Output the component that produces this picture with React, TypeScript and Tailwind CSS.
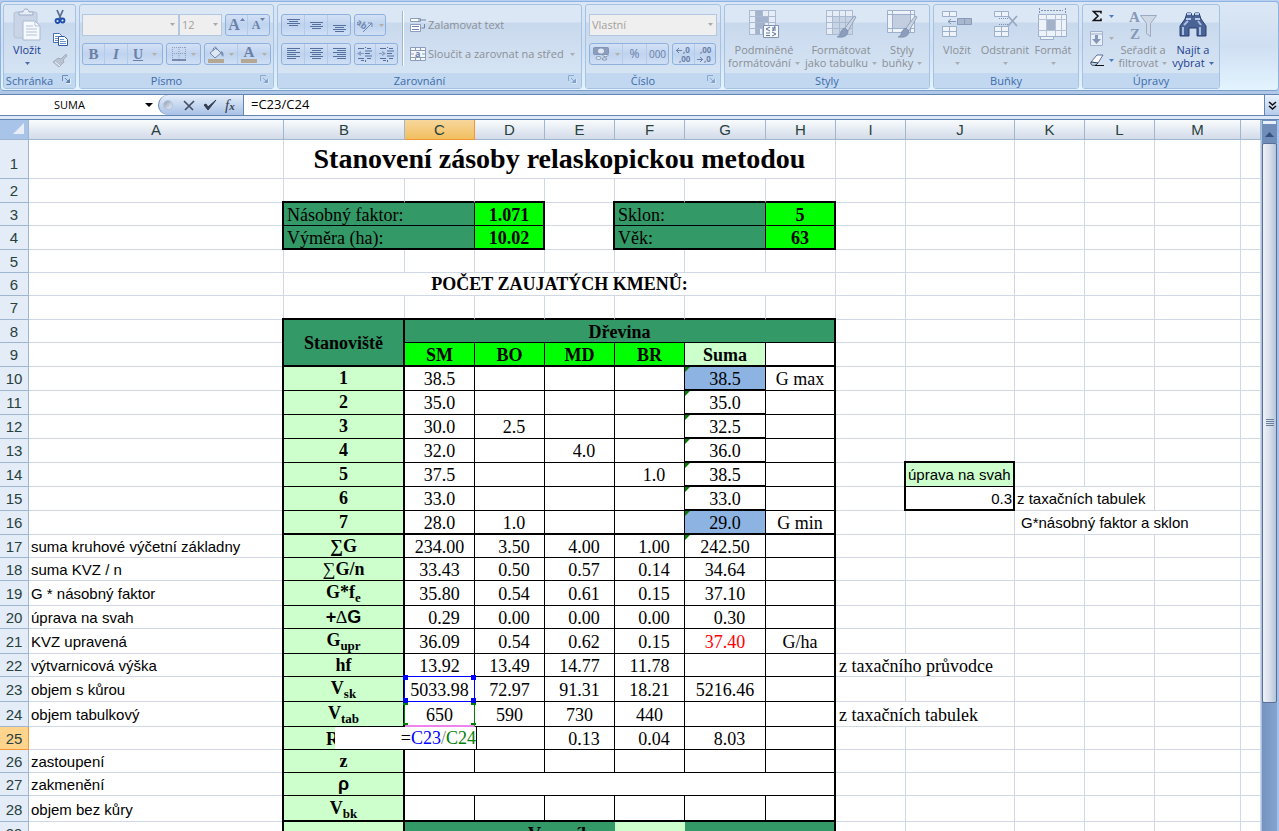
import { ReactNode } from "react";
import clsx from "clsx";

type Cell = {
  text?: ReactNode;
  span?: number;
  rows?: number;
  className?: string;
};

type Row = {
  n: number;
  height: string;
  cells: Record<string, Cell>;
};

const COLUMNS = ["A", "B", "C", "D", "E", "F", "G", "H", "I", "J", "K", "L", "M", ""];

const COLUMN_WIDTHS = [
  "w-[29px]",
  "w-[255px]",
  "w-[121px]",
  "w-[70px]",
  "w-[70px]",
  "w-[70px]",
  "w-[70px]",
  "w-[81px]",
  "w-[70px]",
  "w-[70px]",
  "w-[109px]",
  "w-[70px]",
  "w-[70px]",
  "w-[86px]",
  ""
];

const DARK = "bg-[#339966]";
const LIME = "bg-[#00ff00]";
const PALE = "bg-[#ccffcc]";
const BLUE = "bg-[#8db3e2]";
const SANS = "font-['Liberation_Sans',sans-serif] text-[15px]";

function numbers(values: string[]): Record<string, Cell> {
  const cells: Record<string, Cell> = {};
  values.forEach((value, i) => {
    // single digit values keep room for the missing tens
    cells["CDEFG"[i]] = { text: value, className: clsx("text-center", /^\d\./.test(value) && "pl-[9px]") };
  });
  return cells;
}

function label(text: ReactNode): Cell {
  return { text, className: clsx("text-center align-middle font-bold", PALE) };
}

function subLabel(base: string, sub: string): Cell {
  return {
    text: <>{base}<span className="relative top-1 text-[13px]">{sub}</span></>,
    className: clsx("text-center font-bold", PALE)
  };
}

function note(text: string): Cell {
  return { text, className: clsx("pl-[2px] text-left", SANS) };
}

function ErrorMark() {
  return <span className="absolute top-0 left-0 size-[5px] bg-[#008000] [clip-path:polygon(0_0,100%_0,0_100%)]" />;
}

function plot(n: number, values: string[], extra: Record<string, Cell> = {}): Row {
  const cells = numbers(values);
  const sum = cells.G;
  cells.G = {
    text: <><ErrorMark />{sum.text}</>,
    className: clsx("relative", sum.className, (n === 10 || n === 16) && BLUE)
  };
  cells.B = label(n - 9);
  return { n, height: "h-[24px]", cells: { ...cells, ...extra } };
}

const ROWS: Row[] = [
  { n: 1, height: "h-[39px]", cells: { B: { text: "Stanovení zásoby relaskopickou metodou", span: 7, className: "text-center align-middle font-bold text-[28px] leading-8" } } },
  { n: 2, height: "h-[24px]", cells: {} },
  {
    n: 3,
    height: "h-[23px]",
    cells: {
      B: { text: "Násobný faktor:", span: 2, className: clsx("pl-[3px]", DARK) },
      D: { text: "1.071", className: clsx("text-center font-bold", LIME) },
      F: { text: "Sklon:", span: 2, className: clsx("pl-[3px]", DARK) },
      H: { text: "5", className: clsx("text-center font-bold", LIME) }
    }
  },
  {
    n: 4,
    height: "h-[24px]",
    cells: {
      B: { text: "Výměra (ha):", span: 2, className: clsx("pl-[3px]", DARK) },
      D: { text: "10.02", className: clsx("text-center font-bold", LIME) },
      F: { text: "Věk:", span: 2, className: clsx("pl-[3px]", DARK) },
      H: { text: "63", className: clsx("text-center font-bold", LIME) }
    }
  },
  { n: 5, height: "h-[23px]", cells: {} },
  { n: 6, height: "h-[23px]", cells: { B: { text: "POČET ZAUJATÝCH KMENŮ:", span: 7, className: "text-center align-middle font-bold" } } },
  { n: 7, height: "h-[24px]", cells: {} },
  {
    n: 8,
    height: "h-[23px]",
    cells: {
      B: { text: "Stanoviště", rows: 2, className: clsx("text-center align-middle font-bold", DARK) },
      C: { text: "Dřevina", span: 6, className: clsx("text-center font-bold", DARK) }
    }
  },
  {
    n: 9,
    height: "h-[24px]",
    cells: {
      C: { text: "SM", className: clsx("text-center font-bold", LIME) },
      D: { text: "BO", className: clsx("text-center font-bold", LIME) },
      E: { text: "MD", className: clsx("text-center font-bold", LIME) },
      F: { text: "BR", className: clsx("text-center font-bold", LIME) },
      G: { text: "Suma", className: clsx("text-center font-bold", PALE) }
    }
  },
  plot(10, ["38.5", "", "", "", "38.5"], { H: { text: "G max", className: "text-center" } }),
  plot(11, ["35.0", "", "", "", "35.0"]),
  plot(12, ["30.0", "2.5", "", "", "32.5"]),
  plot(13, ["32.0", "", "4.0", "", "36.0"]),
  plot(14, ["37.5", "", "", "1.0", "38.5"], {
    J: { text: "úprava na svah", className: clsx("pl-[2px]", SANS, PALE) }
  }),
  plot(15, ["33.0", "", "", "", "33.0"], {
    J: { text: "0.3", className: clsx("pr-px text-right", SANS) },
    K: note("z taxačních tabulek")
  }),
  plot(16, ["28.0", "1.0", "", "", "29.0"], {
    H: { text: "G min", className: "text-center" },
    K: { text: "G*násobný faktor a sklon", className: clsx("pl-[6px]", SANS) }
  }),
  {
    n: 17,
    height: "h-[23px]",
    cells: {
      ...numbers(["234.00", "3.50", "4.00", "1.00", ""]),
      A: note("suma kruhové výčetní základny"),
      B: label("∑G"),
      G: { text: <><ErrorMark />242.50</>, className: "relative text-center" }
    }
  },
  { n: 18, height: "h-[23px]", cells: { ...numbers(["33.43", "0.50", "0.57", "0.14", "34.64"]), A: note("suma KVZ / n"), B: label(<><span className="font-normal">∑</span>G/n</>) } },
  { n: 19, height: "h-[25px]", cells: { ...numbers(["35.80", "0.54", "0.61", "0.15", "37.10"]), A: note("G * násobný faktor"), B: subLabel("G*f", "e") } },
  {
    n: 20,
    height: "h-[23px]",
    cells: {
      ...numbers(["0.29", "0.00", "0.00", "0.00", "0.30"]),
      A: note("úprava na svah"),
      B: label(<span className="font-['Liberation_Sans',sans-serif]">+<span className="font-['Liberation_Serif',serif] font-normal">∆</span>G</span>)
    }
  },
  {
    n: 21,
    height: "h-[25px]",
    cells: {
      ...numbers(["36.09", "0.54", "0.62", "0.15", ""]),
      A: note("KVZ upravená"),
      B: subLabel("G", "upr"),
      G: { text: "37.40", className: "text-center text-[#ff0000]" },
      H: { text: "G/ha", className: "text-center" }
    }
  },
  {
    n: 22,
    height: "h-[23px]",
    cells: {
      ...numbers(["13.92", "13.49", "14.77", "11.78", ""]),
      A: note("výtvarnicová výška"),
      B: label("hf"),
      I: { text: "z taxačního průvodce", className: "pl-[3px]" }
    }
  },
  {
    n: 23,
    height: "h-[25px]",
    cells: {
      ...numbers(["", "72.97", "91.31", "18.21", "5216.46"]),
      A: note("objem s kůrou"),
      B: subLabel("V", "sk"),
      C: { text: <>5033.98<RangeFrame /></>, className: "relative text-center" }
    }
  },
  {
    n: 24,
    height: "h-[25px]",
    cells: {
      ...numbers(["", "590", "730", "440", ""]),
      A: note("objem tabulkový"),
      B: subLabel("V", "tab"),
      C: { text: <>650<DivisorFrame /></>, className: "relative text-center" },
      I: { text: "z taxačních tabulek", className: "pl-[3px]" }
    }
  },
  {
    n: 25,
    height: "h-[23px]",
    cells: {
      ...numbers(["", "", "0.13", "0.04", "8.03"]),
      B: { text: "R", className: clsx("pl-[42px] text-left font-bold", PALE) },
      C: { text: <CellEditor />, className: "relative" }
    }
  },
  { n: 26, height: "h-[23px]", cells: { A: note("zastoupení"), B: label("z") } },
  { n: 27, height: "h-[23px]", cells: { A: note("zakmenění"), B: label(<span className="font-['Liberation_Sans',sans-serif]">ρ</span>), C: { span: 6 } } },
  { n: 28, height: "h-[26px]", cells: { A: note("objem bez kůry"), B: subLabel("V", "bk") } },
  {
    n: 29,
    height: "h-[24px]",
    cells: {
      B: { className: PALE },
      C: { text: "Vzorník", span: 3, className: clsx("pr-6 text-right font-bold", DARK) },
      F: { className: PALE },
      G: { span: 2, className: DARK }
    }
  },
  { n: 30, height: "h-[24px]", cells: {} },
  { n: 31, height: "h-[24px]", cells: {} }
];

const has = (list: string, col: string) => col !== "" && list.includes(col);

function rightBorder(col: string, n: number) {
  const inTable = n >= 8 && n <= 29;
  const inInputs = n === 3 || n === 4;
  const thick =
    (inTable && has("ABH", col)) || (inInputs && has("ADEH", col)) || ((n === 14 || n === 15) && has("IJ", col));
  // the strip runs over the corners, where the row lines would cut the border
  if (thick) return "relative border-r-2 border-r-black after:absolute after:-top-0.5 after:-right-0.5 after:-bottom-px after:w-0.5 after:bg-black";
  if (n === 29 && has("CDEFG", col)) return "border-r-0";
  if ((n >= 9 && n <= 28 && has("CDEFG", col)) || (inInputs && has("CG", col))) return "border-r border-r-black";
  if ((n === 22 || n === 24) && col === "I") return "border-r-0";
  if ((n === 15 && col === "K") || (n === 16 && has("KL", col))) return "border-r-0";
  return "border-r border-r-[#d0d7e5]";
}

function bottomBorder(col: string, n: number) {
  const table = has("BCDEFGH", col);
  const inputs = has("BCDFGH", col);
  const thick =
    ((n === 2 || n === 4) && inputs) ||
    ([7, 9, 16, 28].includes(n) && table) ||
    (n >= 10 && n <= 15 && col === "G") ||
    ((n === 13 || n === 15) && col === "J");
  if (thick) return "border-b-2 border-b-black";
  if ((n === 3 && inputs) || (n >= 8 && n <= 27 && table) || (n === 14 && col === "J")) return "border-b border-b-black";
  return "border-b border-b-[#d0d7e5]";
}

function RangeFrame() {
  return (
    <span className="pointer-events-none absolute -inset-px z-10 border border-[#0000ff]">
      <i className="absolute -top-0.5 -left-0.5 size-[5px] bg-[#0000ff]" />
      <i className="absolute -top-0.5 -right-0.5 size-[5px] bg-[#0000ff]" />
      <i className="absolute -bottom-0.5 -left-0.5 size-[5px] bg-[#0000ff]" />
      <i className="absolute -right-0.5 -bottom-0.5 size-[5px] bg-[#0000ff]" />
    </span>
  );
}

function DivisorFrame() {
  return (
    <span className="pointer-events-none absolute -inset-px border-x border-b-2 border-x-[#008000] border-b-[#ee82ee]">
      <i className="absolute top-0 -left-0.5 h-1 w-[5px] bg-[#008000]" />
      <i className="absolute top-0 -right-0.5 h-1 w-[5px] bg-[#008000]" />
      <i className="absolute bottom-0 -left-0.5 h-0.5 w-[5px] bg-[#008000]" />
      <i className="absolute -right-0.5 bottom-0 h-0.5 w-[5px] bg-[#008000]" />
    </span>
  );
}

function CellEditor() {
  return (
    <div
      aria-label="C25"
      className="absolute top-0 -right-[3px] z-10 h-[23px] w-[142px] border-r border-b border-black bg-white text-right leading-[22px] whitespace-nowrap"
      contentEditable
      role="textbox"
      suppressContentEditableWarning
    >
      =<span className="text-[#0000ff]">C23</span>
      <span className="text-[#808080]">/</span>
      <span className="text-[#008000]">C24</span>
    </div>
  );
}

function Sheet() {
  return (
    <div className="min-w-0 flex-1 overflow-hidden bg-white">
      <table className="w-full table-fixed border-separate border-spacing-0 font-['Liberation_Serif',serif] text-[18px] leading-5 text-black">
        <colgroup>
          {COLUMN_WIDTHS.map((width, i) => <col key={i} className={width} />)}
        </colgroup>
        <thead>
          <tr className="h-5 font-['Liberation_Sans',sans-serif] text-[15px] leading-[18px] text-[#27413e]">
            <th aria-label="Vybrat vše" className="border-r border-b border-[#9eb6ce] bg-[#a9c4e9] p-0">
              <svg className="ml-auto block" width="17" height="17" viewBox="0 0 17 17"><path d="M13 2v11H2z" fill="#e8eef7" /></svg>
            </th>
            {COLUMNS.map((col, i) => (
              <th
                key={i}
                className={clsx(
                  "border-r border-b p-0 font-normal",
                  col === "C"
                    ? "border-[#f29536] bg-linear-to-b from-[#f8d79b] to-[#f1bf5e]"
                    : "border-[#9eb6ce] bg-linear-to-b from-[#f9fcfd] to-[#d3dbe9]"
                )}
                scope="col"
              >
                {col}
              </th>
            ))}
          </tr>
        </thead>
        <tbody>
          {ROWS.map((row) => (
            <SheetRow key={row.n} row={row} />
          ))}
        </tbody>
      </table>
    </div>
  );
}

function SheetRow({ row }: { row: Row }) {
  const tall = row.height !== "h-[23px]";
  const cells: ReactNode[] = [];
  for (let i = 0; i < COLUMNS.length; i++) {
    const col = COLUMNS[i];
    // B9 is covered by the cell above
    if (row.n === 9 && col === "B") continue;
    const cell = row.cells[col] ?? {};
    const last = COLUMNS[i + (cell.span ?? 1) - 1];
    const bottom = bottomBorder(col, row.n + (cell.rows ?? 1) - 1);
    cells.push(
      <td
        key={i}
        className={clsx(
          "p-0 whitespace-nowrap",
          !cell.className?.includes("align-middle") && "align-bottom",
          tall && !bottom.includes("border-b-2") && "pb-px",
          rightBorder(last, row.n),
          bottom,
          cell.className
        )}
        colSpan={cell.span}
        rowSpan={cell.rows}
      >
        {cell.text}
      </td>
    );
    i += (cell.span ?? 1) - 1;
  }
  return (
    <tr className={row.height}>
      <th
        className={clsx(
          "border-r border-b p-0 align-bottom font-['Liberation_Sans',sans-serif] text-[15px] leading-5 font-normal text-[#27413e]",
          row.n === 1 ? "pb-1" : tall && "pb-px",
          row.n === 25 ? "border-[#f29536] bg-[#ffd58d]" : "border-[#9eb6ce] bg-[#e4ecf7]"
        )}
        scope="row"
      >
        {row.n}
      </th>
      {cells}
    </tr>
  );
}

function Scrollbar() {
  return (
    <div className="flex w-[18px] shrink-0 flex-col border-r-2 border-l border-[#a3c3ee] bg-linear-to-r from-[#7493c0] to-[#86a4cd]">
      <div className="h-[5px] border border-[#6f8fbd] bg-[#e9f0fa]" />
      <button aria-label="Nahoru" className="flex h-[18px] items-center justify-center bg-[#6f8db8]" type="button">
        <svg width="9" height="5" viewBox="0 0 9 5"><path d="M4.500 0 9 5H0z" fill="#33507f" /></svg>
      </button>
      <div className="flex flex-[560] items-center justify-center rounded-[2px] border border-[#5b6f96] bg-linear-to-r from-[#eef2f7] via-[#d9e0ea] to-[#b4c4da]">
        <svg width="8" height="8" viewBox="0 0 8 8"><path d="M0 .5h8M0 2.500h8M0 4.500h8M0 6.500h8" stroke="#6b7f9f" /></svg>
      </div>
      <div className="flex-[129]" />
    </div>
  );
}

/* ribbon pieces */

function Group({ title, launcher, faded, className, children }: { title: string; launcher?: boolean; faded?: boolean; className: string; children: ReactNode }) {
  return (
    <section className={clsx("flex h-[85px] shrink-0 flex-col rounded-[3px] border border-[#a5c2e2] bg-linear-to-b from-[#dbe7f5] from-20% via-[#c9d9ed] via-22% to-[#d9e7f5]", className)}>
      <div className="flex-1">{children}</div>
      <div className={clsx("relative h-[15px] rounded-b-[2px] bg-[#c1d8f0] text-center leading-[15px] text-[#3e6aaa]", launcher && "pr-5")}>
        {title}
        {launcher && (
          <button aria-label={`${title} – možnosti`} className={clsx("absolute top-[2px] right-1", faded && "opacity-60")} type="button">
            <svg className="block" width="9" height="9" viewBox="0 0 9 9"><path d="M.5 6V.5H6M3 3l3 3" fill="none" stroke="#6c8cb8" /><path d="M8 3.500V8H3.500z" fill="#5a7fb2" /><path d="M4 8.500h4.500V4" fill="none" stroke="#fff" strokeWidth=".6" /></svg>
          </button>
        )}
      </div>
    </section>
  );
}

function Arrow({ className = "text-[#a9adb1]" }: { className?: string }) {
  return <svg className={clsx("inline-block shrink-0", className)} width="5" height="3" viewBox="0 0 5 3"><path d="M0 0h5L2.500 3z" fill="currentColor" /></svg>;
}

function ButtonBar({ children }: { children: ReactNode }) {
  return <div className="flex h-[22px] divide-x divide-[#b3cbea] rounded-[3px] border border-[#8fb1de] bg-linear-to-b from-[#d3e1f5] via-[#bfd3ef] to-[#cfdff5]">{children}</div>;
}

function Tool({ title, className = "w-[23px]", children }: { title: string; className?: string; children: ReactNode }) {
  return <button aria-label={title} className={clsx("flex items-center justify-center gap-[5px] text-[#6a80a6]", className)} type="button">{children}</button>;
}

function Combo({ title, value, className }: { title: string; value: string; className: string }) {
  return (
    <div className={clsx("relative h-[22px]", className)}>
      <select aria-label={title} className="size-full appearance-none border border-[#b3c7e1] bg-[#efefef] pl-[2px] text-[#a3a09a]" defaultValue={value}>
        <option>{value}</option>
      </select>
      <Arrow className="pointer-events-none absolute top-[9px] right-1 text-[#a9a9a9]" />
    </div>
  );
}

function Lines({ d }: { d: string }) {
  return <svg width="15" height="15" viewBox="0 0 15 15"><path d={d} stroke="#55709c" strokeWidth="1" /></svg>;
}

function BigTool({ lines, arrowBelow, active, className, children }: { lines: string[]; arrowBelow?: boolean; active?: boolean; className: string; children: ReactNode }) {
  return (
    <button className={clsx("flex shrink-0 flex-col items-center whitespace-nowrap", active ? "text-[#1c3d8f]" : "text-[#8b8f96]", className)} type="button">
      <span className="flex h-[38px] items-center justify-center">{children}</span>
      <span className="leading-[14px]">{lines[0]}</span>
      {arrowBelow ? (
        <span className="flex h-3 items-center"><Arrow className={active ? "text-[#4a6ca5]" : "text-[#a9adb1]"} /></span>
      ) : (
        <span className="flex items-center gap-1 leading-3">{lines[1]}<Arrow className={active ? "text-[#4a6ca5]" : "text-[#a9adb1]"} /></span>
      )}
    </button>
  );
}

function GridIcon({ children }: { children?: ReactNode }) {
  return (
    <svg width="32" height="32" viewBox="0 0 32 32">
      <path d="M1 2h27v24H1z" fill="#e6edf7" />
      <path d="M1 2.500h27M1 8.500h27M1 14.500h27M1 20.500h27M1 26.500h27M1.500 2v24M7.500 2v24M14.500 2v24M20.500 2v24M27.500 2v24" stroke="#a9bad2" fill="none" />
      {children}
    </svg>
  );
}

function BrushMark() {
  return (
    <g>
      <path d="M31 9 29 8 20 20l3 3z" fill="#c9d3e2" stroke="#8395b3" strokeWidth=".8" />
      <path d="m19 20 4 3c0 5-4 7-11 6 3-1 3-3 4-6z" fill="#8b9dbb" stroke="#7488aa" strokeWidth=".6" />
    </g>
  );
}

function ClipboardGroup() {
  return (
    <Group title="Schránka" launcher className="w-[73px]">
      <div className="flex">
        <BigTool lines={["Vložit"]} arrowBelow active className="w-[46px]">
          <svg width="32" height="34" viewBox="0 0 32 34">
            <rect x="3" y="5" width="23" height="26" rx="2" fill="#c9d5e6" stroke="#b3c2d8" />
            <path d="M8 8V5h4c0-4 6-4 6 0h4v3z" fill="#e9eef5" stroke="#9cadc8" />
            <path d="M12 14h12l5 5v14H12z" fill="#f5f8fc" stroke="#a9b9d0" />
            <path d="M24 14v5h5M15 19h7M15 22h11M15 25h11M15 28h11" fill="none" stroke="#b4c3d9" />
          </svg>
        </BigTool>
        <div className="flex flex-col items-center gap-[6px] pt-[4px] pl-[2px]">
          <button aria-label="Vyjmout" type="button">
            <svg className="block" width="16" height="16" viewBox="0 0 16 16">
              <path d="m5 1 4 9M11 1 7 10" stroke="#5d6f8f" strokeWidth="1.800" />
              <circle cx="5.500" cy="12" r="2" fill="none" stroke="#1f4dae" strokeWidth="1.800" />
              <circle cx="10.500" cy="11.500" r="2" fill="none" stroke="#1f4dae" strokeWidth="1.800" />
            </svg>
          </button>
          <button aria-label="Kopírovat" type="button">
            <svg className="block" width="16" height="16" viewBox="0 0 16 16">
              <path d="M1.500 2.500h6l2 2v7h-8z" fill="#fff" stroke="#4470b8" />
              <path d="M3 5.500h4M3 7.500h4M3 9.500h4" stroke="#6d92cf" />
              <path d="M6.500 5.500h6l3 3v6h-9z" fill="#fff" stroke="#2f5cab" />
              <path d="M8 8.500h4M8 10.500h6M8 12.500h6" stroke="#6d92cf" />
            </svg>
          </button>
          <button aria-label="Kopírovat formát" type="button">
            <svg className="block" width="16" height="16" viewBox="0 0 16 16">
              <path d="m14 1-5 5-3-1-5 4 6 5 5-5-1-2 4-4z" fill="#b9c3d1" stroke="#98a4b8" strokeWidth=".8" />
              <path d="m3 9 5 4" stroke="#edf1f6" />
            </svg>
          </button>
        </div>
      </div>
    </Group>
  );
}

function FontGroup() {
  return (
    <Group title="Písmo" launcher faded className="w-[195px]">
      <div className="flex flex-col gap-[7px] pt-[9px] pl-[2px]">
        <div className="flex">
          <Combo title="Písmo" value="" className="w-[97px]" />
          <Combo title="Velikost písma" value="12" className="w-[43px]" />
          <div className="ml-[3px]">
            <ButtonBar>
              <Tool title="Zvětšit písmo" className="w-[22px] font-['Liberation_Serif',serif] text-[16px] leading-4 font-bold"><span className="flex">A<svg width="5" height="9" viewBox="0 0 5 9"><path d="M0 4 2.500 1 5 4z" fill="currentColor" /></svg></span></Tool>
              <Tool title="Zmenšit písmo" className="w-[21px] font-['Liberation_Serif',serif] text-[12px] leading-4 font-bold"><span className="flex">A<svg width="5" height="9" viewBox="0 0 5 9"><path d="M0 1h5L2.500 4z" fill="currentColor" /></svg></span></Tool>
            </ButtonBar>
          </div>
        </div>
        <div className="flex gap-[3px]">
          <ButtonBar>
            <Tool title="Tučné" className="w-[22px] font-['Liberation_Serif',serif] text-[15px] font-bold">B</Tool>
            <Tool title="Kurzíva" className="w-[23px] font-['Liberation_Serif',serif] text-[15px] font-bold italic">I</Tool>
            <Tool title="Podtržené" className="w-[34px] font-['Liberation_Serif',serif] text-[14px] font-bold"><u>U</u><Arrow className="ml-1 text-[#b5b0a5]" /></Tool>
          </ButtonBar>
          <ButtonBar>
            <Tool title="Ohraničení" className="w-[33px]">
              <svg width="14" height="14" viewBox="0 0 14 14"><path d="M.5 0v13M7 0v13M13.500 0v13M0 .5h14M0 6.500h14" stroke="#8da0bf" strokeDasharray="1 1" /><path d="M0 13h14" stroke="#5b7199" strokeWidth="1.500" /></svg>
              <Arrow className="text-[#b5b0a5]" />
            </Tool>
          </ButtonBar>
          <ButtonBar>
            <Tool title="Barva výplně" className="w-[33px]">
              <svg width="16" height="17" viewBox="0 0 16 17"><path d="m8 2 5 5-6 5-5-5z" fill="#dfe7f2" stroke="#6f86ac" /><path d="M5 5c0-5 4-5 4-1" fill="none" stroke="#6f86ac" /><path d="M13 5c3 1 3 4 2 6-2-2-3-4-2-6z" fill="#7e93b6" /><path d="M0 13h16v4H0z" fill="#b3a892" /></svg>
              <Arrow className="text-[#b5b0a5]" />
            </Tool>
            <Tool title="Barva písma" className="w-[32px] font-['Liberation_Serif',serif] text-[15px] font-bold">
              <span className="flex w-4 flex-col items-center border-b-[4px] border-[#b3a892] leading-[13px]">A</span>
              <Arrow className="text-[#b5b0a5]" />
            </Tool>
          </ButtonBar>
        </div>
      </div>
    </Group>
  );
}

const INDENT = "M8.500 0v1M8.500 13v2M1 1.500h6M10 1.500h4M8 4h7M8 6.500h5M8 9h7M1 11.500h6M10 11.500h4M4 13.500h3";

function AlignmentGroup() {
  return (
    <Group title="Zarovnání" launcher faded className="w-[305px]">
      <div className="flex pt-[9px] pl-[3px]">
        <div className="flex flex-col gap-[7px]">
          <div className="flex gap-[3px]">
            <ButtonBar>
              <Tool title="Nahoru"><Lines d="M1 1.500h13M3 3.500h9M1 5.500h13M3 7.500h9" /></Tool>
              <Tool title="Na střed"><Lines d="M1 4.500h13M3 6.500h9M1 8.500h13M3 10.500h9" /></Tool>
              <Tool title="Dolů" className="w-[22px]"><Lines d="M1 7.500h13M3 9.500h9M1 11.500h13M3 13.500h9" /></Tool>
            </ButtonBar>
            <ButtonBar>
              <Tool title="Orientace" className="w-[30px] gap-0.5">
                <svg width="17" height="16" viewBox="0 0 17 16"><text x="1" y="8" fontSize="9" fontWeight="bold" fill="#7288ae" transform="rotate(35 2 3)">ab</text><path d="m6 15 9-9M11 6h4v4" stroke="#7288ae" fill="none" /></svg>
                <Arrow className="text-[#b5b0a5]" />
              </Tool>
            </ButtonBar>
          </div>
          <div className="flex gap-[3px]">
            <ButtonBar>
              <Tool title="Vlevo"><Lines d="M1 1.500h13M1 3.500h9M1 5.500h13M1 7.500h9M1 9.500h13M1 11.500h9" /></Tool>
              <Tool title="Střed"><Lines d="M1 1.500h13M3 3.500h9M1 5.500h13M3 7.500h9M1 9.500h13M3 11.500h9" /></Tool>
              <Tool title="Vpravo" className="w-[22px]"><Lines d="M1 1.500h13M5 3.500h9M1 5.500h13M5 7.500h9M1 9.500h13M5 11.500h9" /></Tool>
            </ButtonBar>
            <ButtonBar>
              <Tool title="Zmenšit odsazení" className="w-[21px]"><svg width="16" height="15" viewBox="0 0 16 15"><path d={INDENT} stroke="#55709c" /><path d="M4 4v5L0 6.500zM4 6h3v1H4z" fill="#8a9dbf" /></svg></Tool>
              <Tool title="Zvětšit odsazení" className="w-[21px]"><svg width="16" height="15" viewBox="0 0 16 15"><path d={INDENT} stroke="#55709c" /><path d="M3 4v5l4-2.500zM0 6h4v1H0z" fill="#8a9dbf" /></svg></Tool>
            </ButtonBar>
          </div>
        </div>
        <div className="-mt-[3px] ml-1 h-[55px] w-0.5 border-r border-l border-r-white border-l-[#9db6d5]" />
        <div className="ml-[6px] flex flex-col gap-[7px] text-[#8b8f96]">
          <button className="flex h-[22px] items-center gap-[2px] whitespace-nowrap" type="button">
            <svg width="16" height="16" viewBox="0 0 16 16"><path d="M.5 1.500h10v3H.5z" fill="#fff" stroke="#8b9dbb" /><path d="M8 3h8" stroke="#6d83a8" /><path d="M.5 7.500h10v7H.5z" fill="#fff" stroke="#8b9dbb" /><path d="M2 9.500h7M2 12.500h7M14.500 7v4h-3" stroke="#6d83a8" fill="none" /></svg>
            Zalamovat text
          </button>
          <button className="flex h-[22px] items-center gap-[2px] whitespace-nowrap" type="button">
            <svg width="16" height="16" viewBox="0 0 16 16"><path d="M.5 1.500h15v13H.5z" fill="#f4f7fb" stroke="#8b9dbb" /><path d="M0 4.500h16M0 11.500h16M5.500 1v3M10.500 1v3M5.500 12v3M10.500 12v3M1 8h3M12 8h3" stroke="#8b9dbb" /><text x="5" y="11" fontSize="9" fontWeight="bold" fill="#6d83a8">a</text></svg>
            Sloučit a zarovnat na střed
            <Arrow className="ml-1 text-[#a9adb1]" />
          </button>
        </div>
      </div>
    </Group>
  );
}

function NumberGroup() {
  return (
    <Group title="Číslo" launcher faded className="w-[136px]">
      <div className="flex flex-col gap-[7px] pt-[9px] pl-[3px]">
        <Combo title="Formát čísla" value="Vlastní" className="w-[128px]" />
        <div className="flex gap-[3px]">
          <ButtonBar>
            <Tool title="Měna" className="w-[33px]">
              <svg width="17" height="16" viewBox="0 0 17 16"><rect x=".5" y="1.500" width="15" height="7" rx="1" fill="#8b9dbb" stroke="#8094b3" /><ellipse cx="8" cy="5" rx="3" ry="2.500" fill="#dfe7f2" /><path d="M3 12c0-2 5-2 5 0s-5 2-5 0zM10 9.500c0-1.500 5-1.500 5 0s-5 1.500-5 0zM9 13c0-1.500 5-1.500 5 0s-5 1.500-5 0z" fill="#dfe7f2" stroke="#71869f" strokeWidth=".8" /></svg>
              <Arrow className="text-[#b5b0a5]" />
            </Tool>
            <Tool title="Procenta" className="w-[24px] text-xs">%</Tool>
            <Tool title="Oddělovač tisíců" className="w-[21px] text-[10px]">000</Tool>
          </ButtonBar>
          <ButtonBar>
            <Tool title="Přidat desetinné místo" className="w-[22px]">
              <svg width="18" height="17" viewBox="0 0 18 17"><path d="M7 4.500H1M4 2 1.500 4.500 4 7" fill="none" stroke="currentColor" /><text x="8" y="7" fontSize="8" fontWeight="bold" fill="currentColor">,0</text><text x="4" y="16" fontSize="8" fontWeight="bold" fill="currentColor">,00</text></svg>
            </Tool>
            <Tool title="Odebrat desetinné místo" className="w-[20px]">
              <svg width="18" height="17" viewBox="0 0 18 17"><text x="4" y="7" fontSize="8" fontWeight="bold" fill="currentColor">,00</text><path d="M1 13.500h6M4 11l2.500 2.500L4 16" fill="none" stroke="currentColor" /><text x="8" y="16" fontSize="8" fontWeight="bold" fill="currentColor">,0</text></svg>
            </Tool>
          </ButtonBar>
        </div>
      </div>
    </Group>
  );
}

function StylesGroup() {
  return (
    <Group title="Styly" className="w-[206px]">
      <div className="flex">
        <BigTool lines={["Podmíněné", "formátování"]} className="w-[78px]">
          <GridIcon>
            <path d="M8 3h6v5H8zM8 9h12v5H8zM8 15h9v5H8zM8 21h4v5H8z" fill="#a3b3cc" />
            <path d="M15.500 17.500h15v12h-15z" fill="#f7f9fc" stroke="#8093b3" />
            <path d="m22 19-4 2 4 2M18 25h4M18 27.500h4M24 20h4M24 22h4M27 18l-2 5M24 24l4 2-4 2" fill="none" stroke="#60769b" />
          </GridIcon>
        </BigTool>
        <BigTool lines={["Formátovat", "jako tabulku"]} className="w-[76px]">
          <GridIcon><path d="M8 9h19v17H8z" fill="#a9b9d1" opacity=".5" /><BrushMark /></GridIcon>
        </BigTool>
        <BigTool lines={["Styly", "buňky"]} className="w-[46px]">
          <svg width="32" height="32" viewBox="0 0 32 32"><path d="M1.500 2.500h27v22h-27z" fill="#eef3fa" stroke="#9db0cb" /><path d="M1 6.500h28M1 20.500h28M6.500 2v22M24.500 2v22" stroke="#9db0cb" /><path d="M7 7h17v13H7z" fill="#c3cfe1" /><BrushMark /></svg>
        </BigTool>
      </div>
    </Group>
  );
}

function CellsGroup() {
  return (
    <Group title="Buňky" className="w-[146px]">
      <div className="flex">
        <BigTool lines={["Vložit"]} arrowBelow className="w-[46px]">
          <svg width="32" height="30" viewBox="0 0 32 30"><path d="M1.500 2.500h14v5h-14zM8.500 2.500v5M1.500 17.500h14v10h-14zM8.500 17.500v10M1.500 22.500h14" fill="#eef3fa" stroke="#9db0cb" /><path d="M16.500 9.500h14v6h-14zM23.500 9.500v6" fill="#a9b7ce" stroke="#8a9bb8" /><path d="M7 12.500h8M10 10l-3 2.500L10 15" stroke="#7f92b2" fill="none" /></svg>
        </BigTool>
        <BigTool lines={["Odstranit"]} arrowBelow className="w-[50px]">
          <svg width="30" height="30" viewBox="0 0 30 30"><path d="M4.500 2.500h14v5h-14zM11.500 2.500v5M4.500 17.500h14v10h-14zM11.500 17.500v10M4.500 22.500h14" fill="#eef3fa" stroke="#9db0cb" /><path d="M9 9.500h10M9 15.500h10" stroke="#7f92b2" strokeDasharray="1 1" /><path d="m18 7 9 10M27 7l-9 10" stroke="#98a8c0" strokeWidth="1.800" /></svg>
        </BigTool>
        <BigTool lines={["Formát"]} arrowBelow className="w-[46px]">
          <svg width="32" height="32" viewBox="0 0 32 32"><path d="M2.500 0v5M28.500 0v5M4 2.500h22" stroke="#7f92b2" strokeDasharray="2 1" /><path d="M1.500 6.500h28v22h-28z" fill="#eef3fa" stroke="#9db0cb" /><path d="M1 11.500h29M1 22.500h29M9.500 6v22M18.500 6v22M24.500 6v22" stroke="#b3c2d8" /><path d="M10 12h8v10h-8z" fill="#a3b1c9" /><path d="M3.500 28.500h13v3h-13z" fill="#eef3fa" stroke="#9db0cb" /></svg>
        </BigTool>
      </div>
    </Group>
  );
}

function EditingGroup() {
  return (
    <Group title="Úpravy" className="w-[138px]">
      <div className="flex">
        <div className="flex w-[33px] flex-col gap-[6px] pt-[3px] pl-[7px]">
          <button aria-label="Součet" className="flex h-4 items-center gap-[5px]" type="button">
            <svg width="14" height="14" viewBox="0 0 14 14"><path d="M11 4.500V2.500H3.500L8 7l-4.500 4.500H11v-2" fill="none" stroke="#111" strokeWidth="1.600" /></svg>
            <Arrow className="text-[#4a7ac0]" />
          </button>
          <button aria-label="Výplň" className="flex h-4 items-center gap-[5px]" type="button">
            <svg width="14" height="15" viewBox="0 0 14 15"><path d="M.5.500h12v14H.5z" fill="#e8eef7" stroke="#9fb0ca" /><path d="M1 3h11" stroke="#9fb0ca" /><path d="M5 4h3v4h3l-4.500 5L2 8h3z" fill="#8497b7" /></svg>
            <Arrow />
          </button>
          <button aria-label="Vymazat" className="flex h-4 items-center gap-[5px]" type="button">
            <svg width="14" height="14" viewBox="0 0 14 14"><path d="m1 9 6-7h6l-5 8z" fill="#fff" stroke="#5d7096" /><path d="M1 9c-1 3 2 4 5 3l2-2z" fill="#c8d4e6" stroke="#33456b" /><path d="M5 12.500h9" stroke="#111" /></svg>
            <Arrow className="text-[#4a7ac0]" />
          </button>
        </div>
        <BigTool lines={["Seřadit a", "filtrovat"]} className="w-[54px]">
          <svg width="32" height="38" viewBox="0 0 32 38"><g fontFamily="Liberation Serif" fontSize="15" fontWeight="bold" fill="#8799b7"><text x="2" y="17">A</text><text x="3" y="34">Z</text></g><path d="M13.500 10.500h16l-6 8v13l-4-3v-10z" fill="#cfd8e5" stroke="#9baac3" /></svg>
        </BigTool>
        <BigTool lines={["Najít a", "vybrat"]} active className="w-[46px]">
          <svg width="28" height="28" viewBox="0 0 28 28">
            <path d="M8 3h4l1 3h2l1-3h4l2 6 5 7v10h-9v-8h-8v8H1V16l5-7z" fill="#4a6396" stroke="#2a3f70" />
            <path d="M8 4h4M16 4h4M7 9h5M16 9h5" stroke="#b9cbe9" strokeWidth="2" />
            <path d="M4 17v8M21 17v8M9 11l-4 4M19 11l3 4" stroke="#a9bde0" strokeWidth="2" />
          </svg>
        </BigTool>
      </div>
    </Group>
  );
}

function FormulaBar() {
  return (
    <div className="flex h-[22px] shrink-0 border-y border-[#6484b2] bg-white text-black">
      <div className="relative flex w-[158px] shrink-0 items-center">
        <input aria-label="Pole názvů" className="w-[139px] text-center text-[11px]" defaultValue="SUMA" />
        <button aria-label="Názvy" className="absolute top-2 right-[5px]" type="button">
          <svg className="block" width="8" height="5" viewBox="0 0 8 5"><path d="M0 0h8L4 4z" /></svg>
        </button>
      </div>
      <div className="flex w-[86px] shrink-0 items-center gap-2 rounded-l-full border-r border-l border-[#6484b2] bg-linear-to-b from-[#e4edf9] to-[#a8c1e6] pl-1">
        <span className="size-[10px] rounded-full border border-[#b4c3da] bg-linear-to-br from-[#8e9eb8] to-[#eef2f8]" />
        <button aria-label="Storno" className="ml-0.5" type="button"><svg className="block" width="12" height="12" viewBox="0 0 12 12"><path d="m1 2 9 9M11 2 2 11" stroke="#414b60" strokeWidth="1.600" fill="none" /></svg></button>
        <button aria-label="Zadat" type="button"><svg className="block" width="14" height="12" viewBox="0 0 14 12"><path d="m1 6 4 5L13 1 5 8 3 5z" fill="#333d50" stroke="#333d50" /></svg></button>
        <button aria-label="Vložit funkci" className="font-['Liberation_Serif',serif] text-[15px] leading-none text-[#333d50] italic" type="button">f<span className="text-[11px] font-bold">x</span></button>
      </div>
      <input aria-label="Řádek vzorců" className="min-w-0 flex-1 pl-[7px] text-[13px]" defaultValue="=C23/C24" />
      <button aria-label="Rozbalit řádek vzorců" className="flex w-[15px] shrink-0 items-center justify-center border-l border-[#6484b2] bg-linear-to-b from-[#eaf2fc] to-[#b5cbea]" type="button">
        <svg width="9" height="9" viewBox="0 0 9 9"><path d="m1 1 3.500 3L8 1M1 5l3.500 3L8 5" fill="none" stroke="#111" strokeWidth="1.500" /></svg>
      </button>
    </div>
  );
}

export default function App() {
  return (
    <div className="flex h-screen flex-col overflow-hidden bg-[#b8d0f0] font-['Open_Sans',sans-serif] text-[11px]">
      <div className="mt-px flex h-[90px] shrink-0 gap-[3px] overflow-hidden rounded-[4px] border border-[#8db2e3] border-b-[#7f9fcb] bg-linear-to-b from-[#dbe7f5] via-[#cfdff2] to-[#e3f4ff] pt-0.5 pl-0.5">
        <ClipboardGroup />
        <FontGroup />
        <AlignmentGroup />
        <NumberGroup />
        <StylesGroup />
        <CellsGroup />
        <EditingGroup />
      </div>
      <div className="h-[3px] shrink-0 bg-[#b0c8e8]" />
      <FormulaBar />
      <div className="h-1 shrink-0 border-b border-[#6484b2] bg-[#dce8f7]" />
      <div className="flex min-h-0 flex-1">
        <Sheet />
        <Scrollbar />
      </div>
    </div>
  );
}
